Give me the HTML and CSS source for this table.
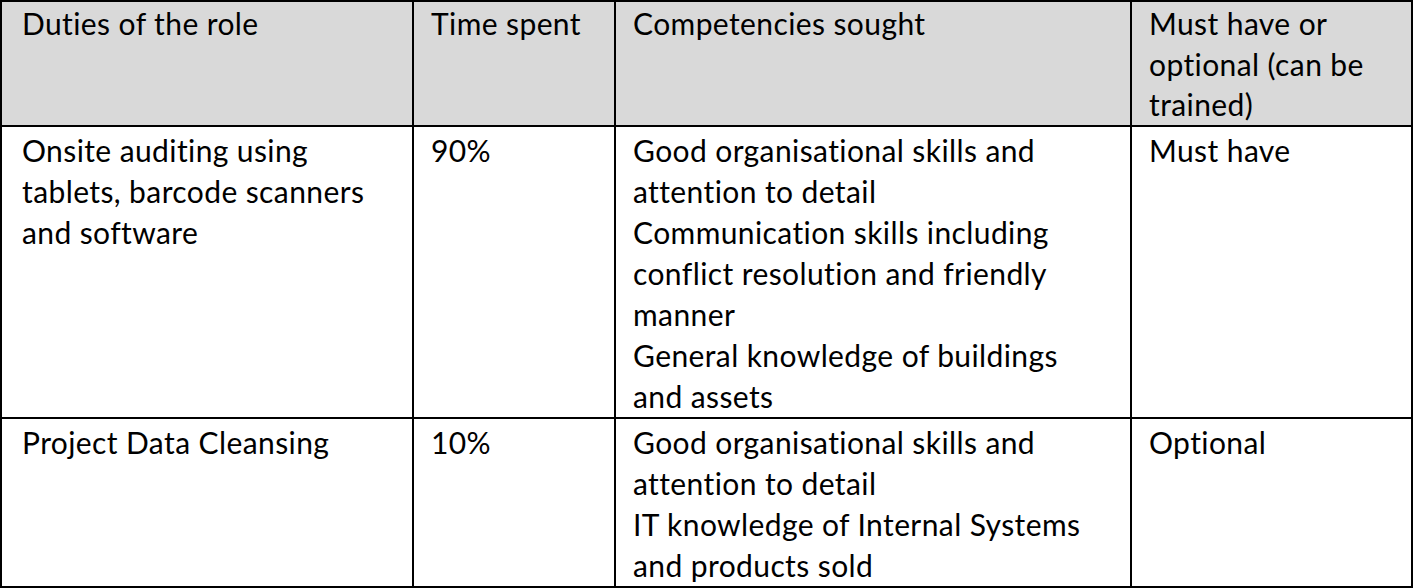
FILE: index.html
```html
<!DOCTYPE html>
<html lang="en">
<head>
<meta charset="utf-8">
<title>Duties of the role</title>
<link rel="stylesheet" href="styles.css">
</head>
<body>
<table class="duties">
  <colgroup>
    <col class="c-duty">
    <col class="c-time">
    <col class="c-comp">
    <col class="c-must">
  </colgroup>
  <thead>
    <tr class="head">
      <th>Duties of the role</th>
      <th>Time spent</th>
      <th>Competencies sought</th>
      <th>Must have or<br>optional (can be<br>trained)</th>
    </tr>
  </thead>
  <tbody>
    <tr>
      <td>Onsite auditing using<br>tablets, barcode scanners<br>and software</td>
      <td>90%</td>
      <td>Good organisational skills and<br>attention to detail<br>Communication skills including<br>conflict resolution and friendly<br>manner<br>General knowledge of buildings<br>and assets</td>
      <td>Must have</td>
    </tr>
    <tr>
      <td>Project Data Cleansing</td>
      <td>10%</td>
      <td>Good organisational skills and<br>attention to detail<br>IT knowledge of Internal Systems<br>and products sold</td>
      <td>Optional</td>
    </tr>
  </tbody>
</table>
</body>
</html>
```
FILE: styles.css
```css
html, body {
  margin: 0;
  padding: 0;
  background: #ffffff;
}

.duties {
  border-collapse: collapse;
  table-layout: fixed;
  width: 1411px;
  font-family: "Lato", "Liberation Sans", sans-serif;
  font-size: 30px;
  letter-spacing: 0.4px;
  line-height: 41px;
  color: #000000;
}

.c-duty { width: 412px; }
.c-time { width: 202px; }
.c-comp { width: 516px; }
.c-must { width: 281px; }

.duties th,
.duties td {
  border: 2px solid #000000;
  text-align: left;
  vertical-align: top;
  font-weight: 400;
  white-space: nowrap;
  padding: 3px 8px 0 17px;
}

.duties th:first-child,
.duties td:first-child {
  padding-left: 20px;
}

.duties th {
  background: #d9d9d9;
  padding-top: 1px;
  line-height: 40.7px;
}
```
